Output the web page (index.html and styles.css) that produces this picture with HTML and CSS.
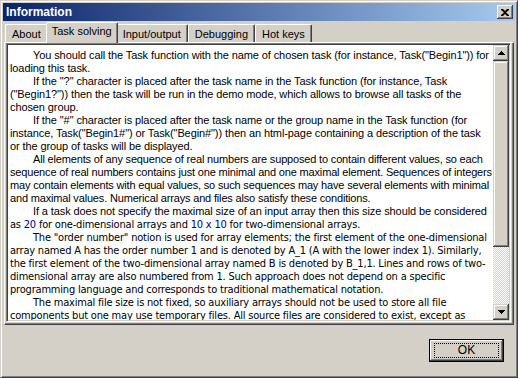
FILE: index.html
```html
<!DOCTYPE html>
<html lang="en">
<head>
    <meta charset="UTF-8">
    <title>Information</title>
    <link rel="stylesheet" href="styles.css">
</head>
<body>
    <div class="window">
        <div class="titlebar">
            <span class="title">Information</span>
            <button class="close-btn">
                <svg width="8" height="7" viewBox="0 0 8 7"><path d="M0 0h2l2 2 2-2h2v1L5 3.5 8 6v1H6L4 5 2 7H0V6l3-2.5L0 1z" fill="#000"/></svg>
            </button>
        </div>

        <div class="client">
            <div class="tabs">
                <div class="tab">About</div>
                <div class="tab active">Task solving</div>
                <div class="tab">Input/output</div>
                <div class="tab">Debugging</div>
                <div class="tab">Hot keys</div>
            </div>

            <div class="sheet">
                <div class="memo">
                    <div class="memo-text">
                        <p>You should call the Task function with the name of chosen task (for instance, Task("Begin1")) for<br>loading this task.</p>
                        <p>If the "?" character is placed after the task name in the Task function (for instance, Task<br>("Begin1?")) then the task will be run in the demo mode, which allows to browse all tasks of the<br>chosen group.</p>
                        <p>If the "#" character is placed after the task name or the group name in the Task function (for<br>instance, Task("Begin1#") or Task("Begin#")) then an html-page containing a description of the task<br>or the group of tasks will be displayed.</p>
                        <p class="tight">All elements of any sequence of real numbers are supposed to contain different values, so each<br>sequence of real numbers contains just one minimal and one maximal element. Sequences of integers<br>may contain elements with equal values, so such sequences may have several elements with minimal<br>and maximal values. Numerical arrays and files also satisfy these conditions.</p>
                        <p>If a task does not specify the maximal size of an input array then this size should be considered<br><span class="alt">as <span class="num">20</span> for one-dimensional arrays and <span class="num">10 x 10</span> for two-dimensional arrays.</span></p>
                        <p class="alt">The "order number" notion is used for array elements; the first element of the one-dimensional<br>array named A has the order number 1 and is denoted by A_1 (A with the lower index 1). Similarly,<br>the first element of the two-dimensional array named B is denoted by B_1,1. Lines and rows of two-<br>dimensional array are also numbered from 1. Such approach does not depend on a specific<br>programming language and corresponds to traditional mathematical notation.</p>
                        <p class="alt">The maximal file size is not fixed, so auxiliary arrays should not be used to store all file<br>components but one may use temporary files. All source files are considered to exist, except as</p>
                    </div>
                    <div class="scrollbar">
                        <div class="sb-btn">
                            <svg width="7" height="4" viewBox="0 0 7 4"><path d="M3 0h1v1h1v1h1v1h1v1H0V3h1V2h1V1h1z" fill="#000"/></svg>
                        </div>
                        <div class="sb-thumb"></div>
                        <div class="sb-track"></div>
                        <div class="sb-btn">
                            <svg width="7" height="4" viewBox="0 0 7 4"><path d="M0 0h7v1H6v1H5v1H4v1H3V3H2V2H1V1H0z" fill="#000"/></svg>
                        </div>
                    </div>
                </div>
            </div>

            <div class="buttons">
                <button class="ok-btn"><span>OK</span></button>
            </div>
        </div>
    </div>
</body>
</html>
```

FILE: styles.css
```css
:root {
    --face: #d4d0c8;
    --shadow: #808080;
    --dark: #404040;
    --light: #ffffff;
}

body {
    margin: 0;
    background: var(--face);
    font-family: 'Liberation Sans', Arial, sans-serif;
    font-size: 11px;
    color: #000;
}

.window {
    width: 518px;
    height: 378px;
    box-sizing: border-box;
    border: 1px solid;
    border-color: var(--face) var(--dark) var(--dark) var(--face);
    box-shadow: inset 1px 1px var(--light), inset -1px -1px var(--shadow);
    padding: 2px;
    display: flex;
    flex-direction: column;
}

/* caption */
.titlebar {
    height: 18px;
    flex: none;
    display: flex;
    align-items: center;
    justify-content: space-between;
    padding: 0 2px 0 3px;
    background: linear-gradient(to right, #0a246a, #a6caf0);
}

.title {
    color: #fff;
    font-weight: bold;
    font-size: 12px;
}

.close-btn {
    width: 16px;
    height: 14px;
    padding: 0;
    border: none;
    background: var(--face);
    box-shadow: inset -1px -1px var(--dark), inset 1px 1px var(--light), inset -2px -2px var(--shadow);
    display: flex;
    align-items: center;
    justify-content: center;
}

.close-btn svg {
    display: block;
}

.client {
    flex: 1;
    display: flex;
    flex-direction: column;
    padding: 1px 1px 0 1px;
}

/* page control */
.tabs {
    display: flex;
    height: 20px;
    padding-left: 1px;
    position: relative;
    z-index: 1;
}

.tab {
    height: 18px;
    margin-top: 2px;
    box-sizing: border-box;
    padding: 2px 6px 0 6px;
    border-top: 1px solid var(--light);
    border-left: 1px solid var(--light);
    border-right: 1px solid var(--dark);
    border-radius: 2px 2px 0 0;
    box-shadow: inset -1px 0 var(--shadow);
    line-height: 14px;
    font-size: 11px;
    white-space: nowrap;
}

.tab.active {
    height: 21px;
    margin: 0 -2px;
    padding: 1px 5px 0 5px;
    background: var(--face);
    position: relative;
    z-index: 2;
}

.sheet {
    height: 283px;
    box-sizing: border-box;
    border-top: 1px solid var(--light);
    border-left: 1px solid var(--light);
    border-right: 1px solid var(--dark);
    border-bottom: 1px solid var(--dark);
    box-shadow: inset -1px -1px var(--shadow);
    padding: 0 2px 2px 1px;
}

.memo {
    height: 279px;
    box-sizing: border-box;
    border: 1px solid;
    border-color: var(--shadow) var(--light) var(--light) var(--shadow);
    box-shadow: inset 1px 1px var(--dark), inset -1px -1px var(--face);
    padding: 1px;
    background: #fff;
    display: flex;
}

.memo-text {
    flex: 1;
    overflow: hidden;
    padding: 4px 0 0 2px;
    font-family: 'Liberation Sans', Arial, sans-serif;
    font-size: 11px;
    letter-spacing: -0.1px;
    line-height: 13px;
    white-space: nowrap;
}

.memo-text p {
    margin: 0;
    text-indent: 23px;
}

.memo-text .tight {
    letter-spacing: -0.17px;
}

.alt {
    font-family: 'DejaVu Sans Condensed', 'DejaVu Sans', sans-serif;
    font-stretch: semi-condensed;
    font-size: 11px;
    letter-spacing: -0.2px;
}

.num {
    color: #000080;
}

/* scroll bar */
.scrollbar {
    width: 16px;
    display: flex;
    flex-direction: column;
}

.sb-btn,
.sb-thumb {
    background: var(--face);
    box-shadow: inset -1px -1px var(--dark), inset 1px 1px var(--face), inset -2px -2px var(--shadow), inset 2px 2px var(--light);
}

.sb-btn {
    height: 16px;
    flex: none;
    display: flex;
    align-items: center;
    justify-content: center;
}

.sb-btn svg {
    display: block;
}

.sb-thumb {
    height: 186px;
    flex: none;
}

.sb-track {
    flex: 1;
    background-color: #fff;
    background-image: repeating-conic-gradient(var(--face) 0 25%, #fff 0 50%);
    background-size: 2px 2px;
}

.buttons {
    display: flex;
    justify-content: flex-end;
    padding: 14px 10px 0 0;
}

.ok-btn {
    width: 75px;
    height: 23px;
    padding: 0;
    border: 1px solid #000;
    background: var(--face);
    box-shadow: inset -1px -1px var(--dark), inset 1px 1px var(--light), inset -2px -2px var(--shadow);
    font-family: 'Liberation Sans', Arial, sans-serif;
    font-size: 12px;
    color: #000;
    display: flex;
    align-items: center;
    justify-content: center;
}

.ok-btn span {
    width: 63px;
    height: 13px;
    line-height: 13px;
    outline: 1px dotted #000;
}
```
